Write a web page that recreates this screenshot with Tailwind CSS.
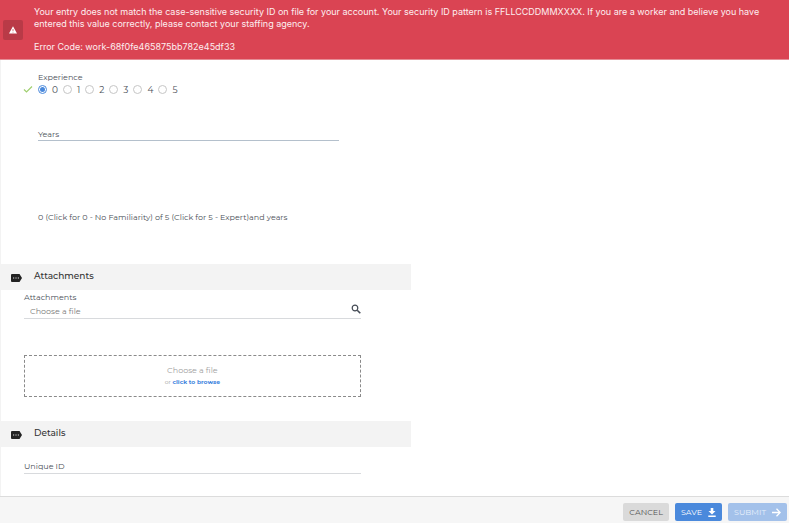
<!DOCTYPE html>
<html lang="en">
<head>
    <meta charset="UTF-8">
    <meta name="viewport" content="width=device-width, initial-scale=1.0">
    <title>Work Order</title>
    <script src="https://cdn.jsdelivr.net/npm/@tailwindcss/browser@4"></script>
</head>
<body class="min-h-screen flex flex-col bg-white font-['Montserrat','Inter',sans-serif] text-[8px] leading-3 text-[#4a4f57]">
    <!-- Error banner -->
    <header role="alert" class="flex items-center gap-[11px] bg-[#da4453] border-b border-[#e58d96] pl-[3px] pr-7 pt-[6px] pb-[6px] font-['Inter',sans-serif] text-[9px] text-[#fdeef0]">
        <span class="shrink-0 flex items-center justify-center size-5 rounded-xs bg-[#b93a47] text-white">
            <svg class="size-2" viewBox="0 0 16 16" fill="currentColor" aria-hidden="true">
                <path fill-rule="evenodd" d="M8 0.5 16 15H0ZM7.3 6v4h1.4V6ZM7.3 11.5v1.5h1.4v-1.5Z"/>
            </svg>
        </span>
        <div class="flex flex-col gap-[11px]">
            <p>Your entry does not match the case-sensitive security ID on file for your account. Your security ID pattern is FFLLCCDDMMXXXX. If you are a worker and believe you have entered this value correctly, please contact your staffing agency.</p>
            <p>Error Code: work-68f0fe465875bb782e45df33</p>
        </div>
    </header>

    <main class="grow border-l border-[#f3f3f3]">
        <form id="work-form" class="w-[52%]">
            <!-- Experience -->
            <section class="pl-[37px] pr-[72px] pt-[11px]">
                <fieldset>
                    <legend>Experience</legend>
                    <div class="flex items-center gap-[5px] -ml-[15px] h-[13px] text-[9px]">
                        <svg class="size-[10px]" viewBox="0 0 10 10" fill="none" stroke="#a0cf70" stroke-width="1.2" aria-hidden="true">
                            <path d="M1 4.500 3.500 7 9 1.500"/>
                        </svg>
                        <label class="flex items-center gap-[5px]"><input type="radio" name="experience" value="0" checked class="appearance-none size-[9px] rounded-full border border-[#4a89dc] bg-[#4a89dc] bg-clip-content p-px">0</label>
                        <label class="flex items-center gap-[5px]"><input type="radio" name="experience" value="1" class="appearance-none size-[9px] rounded-full border border-[#c6c6c6]">1</label>
                        <label class="flex items-center gap-[5px]"><input type="radio" name="experience" value="2" class="appearance-none size-[9px] rounded-full border border-[#c6c6c6]">2</label>
                        <label class="flex items-center gap-[5px]"><input type="radio" name="experience" value="3" class="appearance-none size-[9px] rounded-full border border-[#c6c6c6]">3</label>
                        <label class="flex items-center gap-[5px]"><input type="radio" name="experience" value="4" class="appearance-none size-[9px] rounded-full border border-[#c6c6c6]">4</label>
                        <label class="flex items-center gap-[5px]"><input type="radio" name="experience" value="5" class="appearance-none size-[9px] rounded-full border border-[#c6c6c6]">5</label>
                    </div>
                </fieldset>
                <div class="flex items-end mt-8 border-b border-[#b4c0cc]">
                    <label for="years">Years</label>
                    <input id="years" type="text" class="grow min-w-0 h-3 pl-2 outline-none">
                </div>
                <p class="mt-[70px]">0 (Click for 0 - No Familiarity) of 5 (Click for 5 - Expert)and years</p>
            </section>

            <!-- Attachments -->
            <section class="mt-[41px]">
                <div class="flex items-center gap-3 h-[26px] pl-[10px] pb-[2px] bg-[#f3f3f3]">
                    <svg class="w-[11px] h-2 mt-1" viewBox="0 0 11 8" aria-hidden="true">
                        <path fill="#222" d="M1 0h7.500L11 4 8.500 8H1Q0 8 0 7V1Q0 0 1 0Z"/>
                        <path fill="#ddd" d="M2 3.500h1.200v1H2ZM4.400 3.500h1.200v1H4.400ZM6.800 3.500H8v1H6.800Z"/>
                    </svg>
                    <h2 class="text-[9px] font-medium text-[#333]">Attachments</h2>
                </div>
                <div class="pl-[23px] pr-[50px] pt-px">
                    <label for="attachment">Attachments</label>
                    <div class="flex items-center h-4 pl-[6px] border-b border-[#d8dadd]">
                        <input id="attachment" type="text" placeholder="Choose a file" class="grow min-w-0 h-3 outline-none placeholder:text-[#7b7b7b]">
                        <button type="button" aria-label="Search" class="mb-1">
                            <svg class="size-[10px]" viewBox="0 0 10 10" fill="none" stroke="#444b55" aria-hidden="true">
                                <circle cx="4" cy="4" r="2.800" stroke-width="1.200"/>
                                <path d="M6.200 6.200 9.300 9.300" stroke-width="1.600"/>
                            </svg>
                        </button>
                    </div>
                    <div class="flex flex-col items-center justify-center h-[42px] mt-9 border border-dashed border-[#8a8a8a] text-[#a0a0a0]">
                        <p>Choose a file</p>
                        <p class="text-[6px]">or <a href="#attachment" class="font-bold text-[#3f85de]">click to browse</a></p>
                    </div>
                </div>
            </section>

            <!-- Details -->
            <section class="mt-6">
                <div class="flex items-center gap-3 h-[26px] pl-[10px] pb-[2px] bg-[#f3f3f3]">
                    <svg class="w-[11px] h-2 mt-1" viewBox="0 0 11 8" aria-hidden="true">
                        <path fill="#222" d="M1 0h7.500L11 4 8.500 8H1Q0 8 0 7V1Q0 0 1 0Z"/>
                        <path fill="#ddd" d="M2 3.500h1.200v1H2ZM4.400 3.500h1.200v1H4.400ZM6.800 3.500H8v1H6.800Z"/>
                    </svg>
                    <h2 class="text-[9px] font-medium text-[#333]">Details</h2>
                </div>
                <div class="pl-[23px] pr-[50px] pt-[13px]">
                    <div class="flex items-end pb-px border-b border-[#d8dadd]">
                        <label for="unique-id">Unique ID</label>
                        <input id="unique-id" type="text" class="grow min-w-0 h-3 pl-2 outline-none">
                    </div>
                </div>
            </section>
        </form>
    </main>

    <!-- Actions -->
    <footer class="flex justify-end gap-[6px] h-[27px] pt-[6px] pr-[2px] border-t border-[#dcdcdc] bg-[#f6f6f6]">
        <button type="button" class="h-[18px] px-[6px] rounded-xs bg-[#dadada] text-[#555]">CANCEL</button>
        <button type="submit" form="work-form" class="flex items-center gap-[6px] h-[18px] px-[6px] rounded-xs bg-[#4a89dc] text-white">SAVE
            <svg class="w-2 h-[9px]" viewBox="0 0 8 9" fill="currentColor" aria-hidden="true">
                <path d="M2.700 0h2.600v3H7.500L4 6.500 0.500 3H2.700ZM0.300 7.500h7.400v1.500H0.300Z"/>
            </svg>
        </button>
        <button type="submit" form="work-form" disabled class="flex items-center gap-[6px] h-[18px] px-[6px] rounded-xs bg-[#a3c1ea] text-[#e6effa]">SUBMIT
            <svg class="size-[9px]" viewBox="0 0 9 9" fill="none" stroke="#fff" stroke-width="1.300" aria-hidden="true">
                <path d="M0 4.500h8M4.500 0.800 8.200 4.500 4.500 8.200"/>
            </svg>
        </button>
    </footer>
</body>
</html>
